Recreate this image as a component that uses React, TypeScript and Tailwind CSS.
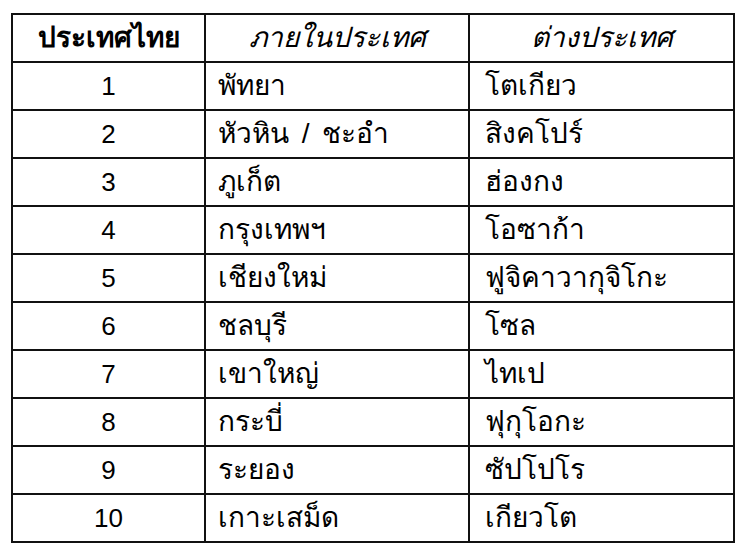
import React from "react";

const rows: [string, string, string][] = [
  ["1", "พัทยา", "โตเกียว"],
  ["2", "หัวหิน / ชะอำ", "สิงคโปร์"],
  ["3", "ภูเก็ต", "ฮ่องกง"],
  ["4", "กรุงเทพฯ", "โอซาก้า"],
  ["5", "เชียงใหม่", "ฟูจิคาวากุจิโกะ"],
  ["6", "ชลบุรี", "โซล"],
  ["7", "เขาใหญ่", "ไทเป"],
  ["8", "กระบี่", "ฟุกุโอกะ"],
  ["9", "ระยอง", "ซัปโปโร"],
  ["10", "เกาะเสม็ด", "เกียวโต"],
];

export default function App() {
  return (
    <div className="w-[747px] h-[548px] bg-white pl-[11px] pt-[13px] font-['Liberation_Sans',sans-serif] text-black">
      <table className="border-collapse border-2 border-[#111] w-[722px] table-fixed">
        <colgroup>
          <col className="w-[193px]" />
          <col className="w-[264px]" />
          <col className="w-[265px]" />
        </colgroup>
        <thead>
          <tr className="h-[48px]">
            <th className="border-2 border-[#111] text-[28px] font-bold text-center leading-none">ประเทศไทย</th>
            <th className="border-2 border-[#111] text-[28px] font-normal italic text-center leading-none">ภายในประเทศ</th>
            <th className="border-2 border-[#111] text-[28px] font-normal italic text-center leading-none">ต่างประเทศ</th>
          </tr>
        </thead>
        <tbody>
          {rows.map((r) => (
            <tr key={r[0]} className="h-[48px]">
              <td className="border-2 border-[#111] text-[26px] text-center leading-none">{r[0]}</td>
              <td className="border-2 border-[#111] text-[28px] pl-[12px] leading-none [word-spacing:5px]">{r[1]}</td>
              <td className="border-2 border-[#111] text-[28px] pl-[15px] leading-none">{r[2]}</td>
            </tr>
          ))}
        </tbody>
      </table>
    </div>
  );
}
